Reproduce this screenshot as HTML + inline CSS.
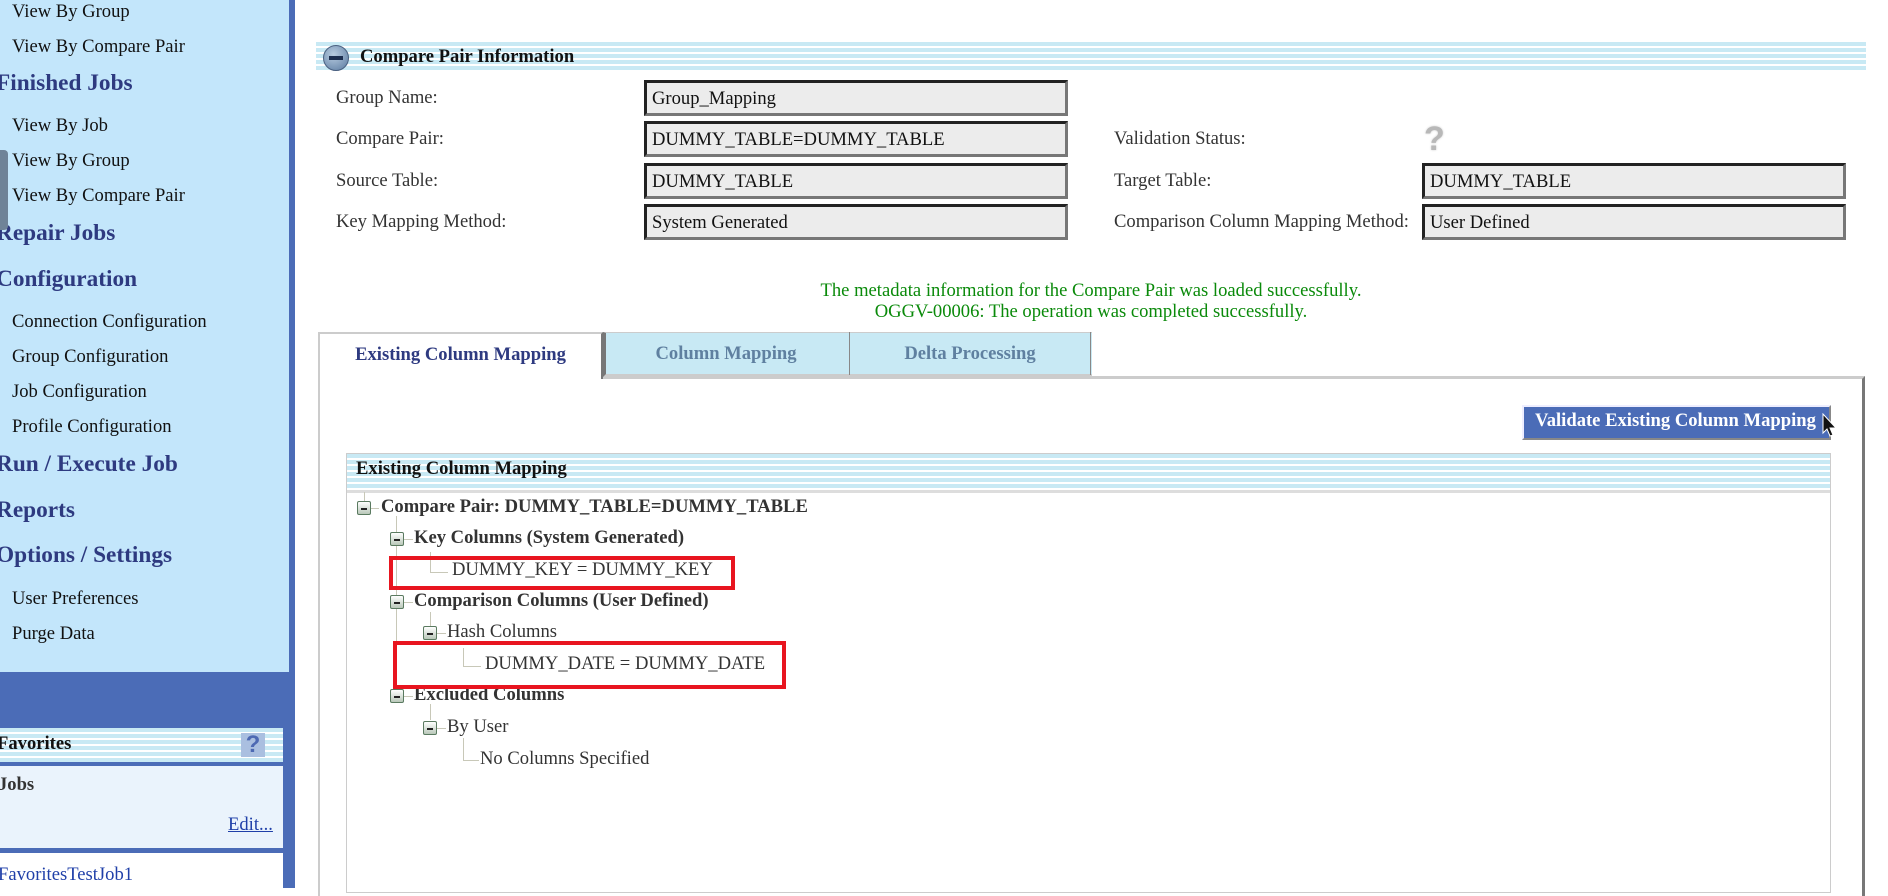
<!DOCTYPE html>
<html><head><meta charset="utf-8"><style>
*{margin:0;padding:0;box-sizing:border-box}
body{width:1888px;height:888px;overflow:hidden;position:relative;background:#fff;font-family:"Liberation Serif",serif;font-size:18.6px;color:#333}
.a{position:absolute;white-space:nowrap}
.side{position:absolute;left:0;top:0;width:295px;height:888px;background:#4b6cb7}
.panel{position:absolute;left:0;top:0;width:289px;height:672px;background:#c3e6fb}
.it{position:absolute;left:12px;font-size:18.6px;color:#111}
.h{position:absolute;left:-4px;font-size:23.3px;font-weight:bold;color:#2e3a80}
.stripe{background:repeating-linear-gradient(to bottom,#c8e9f4 0,#c8e9f4 4px,#fff 4px,#fff 6px)}
.inp{position:absolute;height:36px;width:424px;background:#ececec;border:3px solid;border-color:#222 #777 #777 #222;font-size:18.6px;color:#111;padding:5px 0 0 5px}
.lbl{position:absolute;font-size:18.6px;color:#333}
.bx{display:inline-block;width:14px;height:14px;border:1px solid #5a7a60;border-radius:2px;background:linear-gradient(#fff,#b9c8b9);position:absolute}
.bx:after{content:"";position:absolute;left:3px;top:6px;width:6px;height:2px;background:#222}
.tr{position:absolute;font-size:18.6px;color:#333}
.b{font-weight:bold}
.vl{position:absolute;width:1px;background:#c8c8b8}
.hl{position:absolute;height:1px;background:#c8c8b8}
</style></head><body>
<div class="side"></div>
<div class="panel"></div>
<div class="it" style="top:1px">View By Group</div>
<div class="it" style="top:36px">View By Compare Pair</div>
<div class="h" style="top:70px">Finished Jobs</div>
<div class="it" style="top:115px">View By Job</div>
<div class="it" style="top:150px">View By Group</div>
<div class="it" style="top:185px">View By Compare Pair</div>
<div class="h" style="top:220px">Repair Jobs</div>
<div class="h" style="top:266px">Configuration</div>
<div class="it" style="top:311px">Connection Configuration</div>
<div class="it" style="top:346px">Group Configuration</div>
<div class="it" style="top:381px">Job Configuration</div>
<div class="it" style="top:416px">Profile Configuration</div>
<div class="h" style="top:451px">Run / Execute Job</div>
<div class="h" style="top:497px">Reports</div>
<div class="h" style="top:542px">Options / Settings</div>
<div class="it" style="top:588px">User Preferences</div>
<div class="it" style="top:623px">Purge Data</div>
<div style="position:absolute;left:0;top:150px;width:8px;height:80px;background:#6f8398;border-radius:0 4px 4px 0"></div>

<div class="a stripe" style="left:0;top:728px;width:283px;height:34px"></div>
<div class="a b" style="left:-3px;top:733px;color:#111;font-size:18.6px">Favorites</div>
<div class="a" style="left:241px;top:733px;width:24px;height:24px;background:#aabfe0;color:#4d69b3;font:bold 24px 'Liberation Sans',sans-serif;text-align:center;line-height:24px">?</div>
<div class="a" style="left:0;top:766px;width:283px;height:82px;background:#eaf3fc"></div>
<div class="a b" style="left:-2px;top:774px;color:#333;font-size:18.6px">Jobs</div>
<div class="a" style="left:228px;top:814px;color:#1f3fa8;text-decoration:underline;font-size:18.6px">Edit...</div>
<div class="a" style="left:0;top:853px;width:283px;height:40px;background:#fff"></div>
<div class="a" style="left:-2px;top:864px;color:#1f3fa8;font-size:18.6px">FavoritesTestJob1</div>

<div class="a stripe" style="left:316px;top:42px;width:1550px;height:30px"></div>
<div class="a" style="left:323px;top:45px;width:26px;height:26px;border-radius:50%;background:radial-gradient(circle at 40% 35%,#b8cce0,#5a7aa0);border:1px solid #4a6080"></div>
<div class="a" style="left:329px;top:56px;width:14px;height:4px;background:#1d2f50"></div>
<div class="a b" style="left:360px;top:46px;font-size:18.6px;color:#111">Compare Pair Information</div>

<div class="lbl" style="left:336px;top:87px">Group Name:</div>
<div class="lbl" style="left:336px;top:128px">Compare Pair:</div>
<div class="lbl" style="left:336px;top:170px">Source Table:</div>
<div class="lbl" style="left:336px;top:211px">Key Mapping Method:</div>
<div class="inp" style="left:644px;top:80px">Group_Mapping</div>
<div class="inp" style="left:644px;top:121px">DUMMY_TABLE=DUMMY_TABLE</div>
<div class="inp" style="left:644px;top:163px">DUMMY_TABLE</div>
<div class="inp" style="left:644px;top:204px">System Generated</div>
<div class="lbl" style="left:1114px;top:128px">Validation Status:</div>
<div class="a" style="left:1424px;top:120px;font:bold 34px 'Liberation Sans',sans-serif;color:#b8b8b8;text-shadow:0 0 2px #ccc">?</div>
<div class="lbl" style="left:1114px;top:170px">Target Table:</div>
<div class="lbl" style="left:1114px;top:211px">Comparison Column Mapping Method:</div>
<div class="inp" style="left:1422px;top:163px">DUMMY_TABLE</div>
<div class="inp" style="left:1422px;top:204px">User Defined</div>

<div class="a" style="left:0;width:2182px;top:280px;text-align:center;color:#0a8a0a;font-size:18.6px;line-height:21px">The metadata information for the Compare Pair was loaded successfully.<br>OGGV-00006: The operation was completed successfully.</div>

<div class="a" style="left:318px;top:376px;width:1547px;height:520px;border-top:3px solid #ccc;border-left:2px solid #ccc;border-right:3px solid #777"></div>
<div class="a" style="left:318px;top:332px;width:285px;height:47px;background:#fff;border:2px solid #ccc;border-bottom:none;border-right:2px solid #777"></div>
<div class="a b" style="left:318px;top:344px;width:285px;text-align:center;color:#2e3a80;font-size:18.6px">Existing Column Mapping</div>
<div class="a" style="left:603px;top:332px;width:489px;height:45px;background:#c8e9f4;border-top:1px solid #ccc;border-bottom:3px solid #ccc;border-left:3px solid #777"></div>
<div class="a" style="left:849px;top:332px;width:1px;height:43px;background:#888"></div>
<div class="a" style="left:1090px;top:332px;width:1px;height:43px;background:#888"></div>
<div class="a b" style="left:603px;top:343px;width:246px;text-align:center;color:#5f80a0;font-size:18.6px">Column Mapping</div>
<div class="a b" style="left:850px;top:343px;width:240px;text-align:center;color:#5f80a0;font-size:18.6px">Delta Processing</div>

<div class="a" style="left:1522px;top:405px;width:309px;height:35px;background:#4b6cb7;border:2px solid;border-color:#eef #888 #888 #eef"></div>
<div class="a b" style="left:1535px;top:410px;color:#fff;font-size:18.6px">Validate Existing Column Mapping</div>
<svg class="a" style="left:1822px;top:413px" width="16" height="26" viewBox="0 0 16 26"><path d="M1 1 L1 20 L5 16 L8 23 L11 22 L8 15 L14 15 Z" fill="#111" stroke="#fff" stroke-width="1"/></svg>

<div class="a" style="left:346px;top:453px;width:1485px;height:440px;border:1px solid #ccc"></div>
<div class="a stripe" style="left:347px;top:454px;width:1483px;height:36px"></div>
<div class="a b" style="left:356px;top:458px;color:#111;font-size:18.6px">Existing Column Mapping</div>
<div class="a" style="left:347px;top:490px;width:1483px;height:3px;background:#ddd"></div>

<div class="vl" style="left:364px;top:492px;height:14px"></div>
<div class="vl" style="left:396px;top:516px;height:172px"></div>
<div class="vl" style="left:430px;top:552px;height:20px"></div><div class="hl" style="left:430px;top:572px;width:18px"></div>
<div class="vl" style="left:430px;top:612px;height:14px"></div>
<div class="vl" style="left:463px;top:648px;height:18px"></div><div class="hl" style="left:463px;top:666px;width:18px"></div>
<div class="vl" style="left:430px;top:704px;height:16px"></div>
<div class="vl" style="left:463px;top:738px;height:22px"></div><div class="hl" style="left:463px;top:760px;width:16px"></div>

<span class="bx" style="left:357px;top:501px"></span><div class="hl" style="left:371px;top:508px;width:8px"></div>
<div class="tr b" style="left:381px;top:496px">Compare Pair: DUMMY_TABLE=DUMMY_TABLE</div>
<span class="bx" style="left:390px;top:532px"></span><div class="hl" style="left:404px;top:539px;width:9px"></div>
<div class="tr b" style="left:414px;top:527px">Key Columns (System Generated)</div>
<div class="tr" style="left:452px;top:559px">DUMMY_KEY = DUMMY_KEY</div>
<span class="bx" style="left:390px;top:595px"></span><div class="hl" style="left:404px;top:602px;width:9px"></div>
<div class="tr b" style="left:414px;top:590px">Comparison Columns (User Defined)</div>
<span class="bx" style="left:423px;top:626px"></span><div class="hl" style="left:437px;top:633px;width:9px"></div>
<div class="tr" style="left:447px;top:621px">Hash Columns</div>
<div class="tr" style="left:485px;top:653px">DUMMY_DATE = DUMMY_DATE</div>
<span class="bx" style="left:390px;top:689px"></span><div class="hl" style="left:404px;top:696px;width:9px"></div>
<div class="tr b" style="left:414px;top:684px">Excluded Columns</div>
<span class="bx" style="left:423px;top:721px"></span><div class="hl" style="left:437px;top:728px;width:9px"></div>
<div class="tr" style="left:447px;top:716px">By User</div>
<div class="tr" style="left:480px;top:748px">No Columns Specified</div>

<div class="a" style="left:389px;top:556px;width:346px;height:34px;border:4px solid #e8151f"></div>
<div class="a" style="left:393px;top:641px;width:393px;height:48px;border:4px solid #e8151f"></div>
</body></html>
